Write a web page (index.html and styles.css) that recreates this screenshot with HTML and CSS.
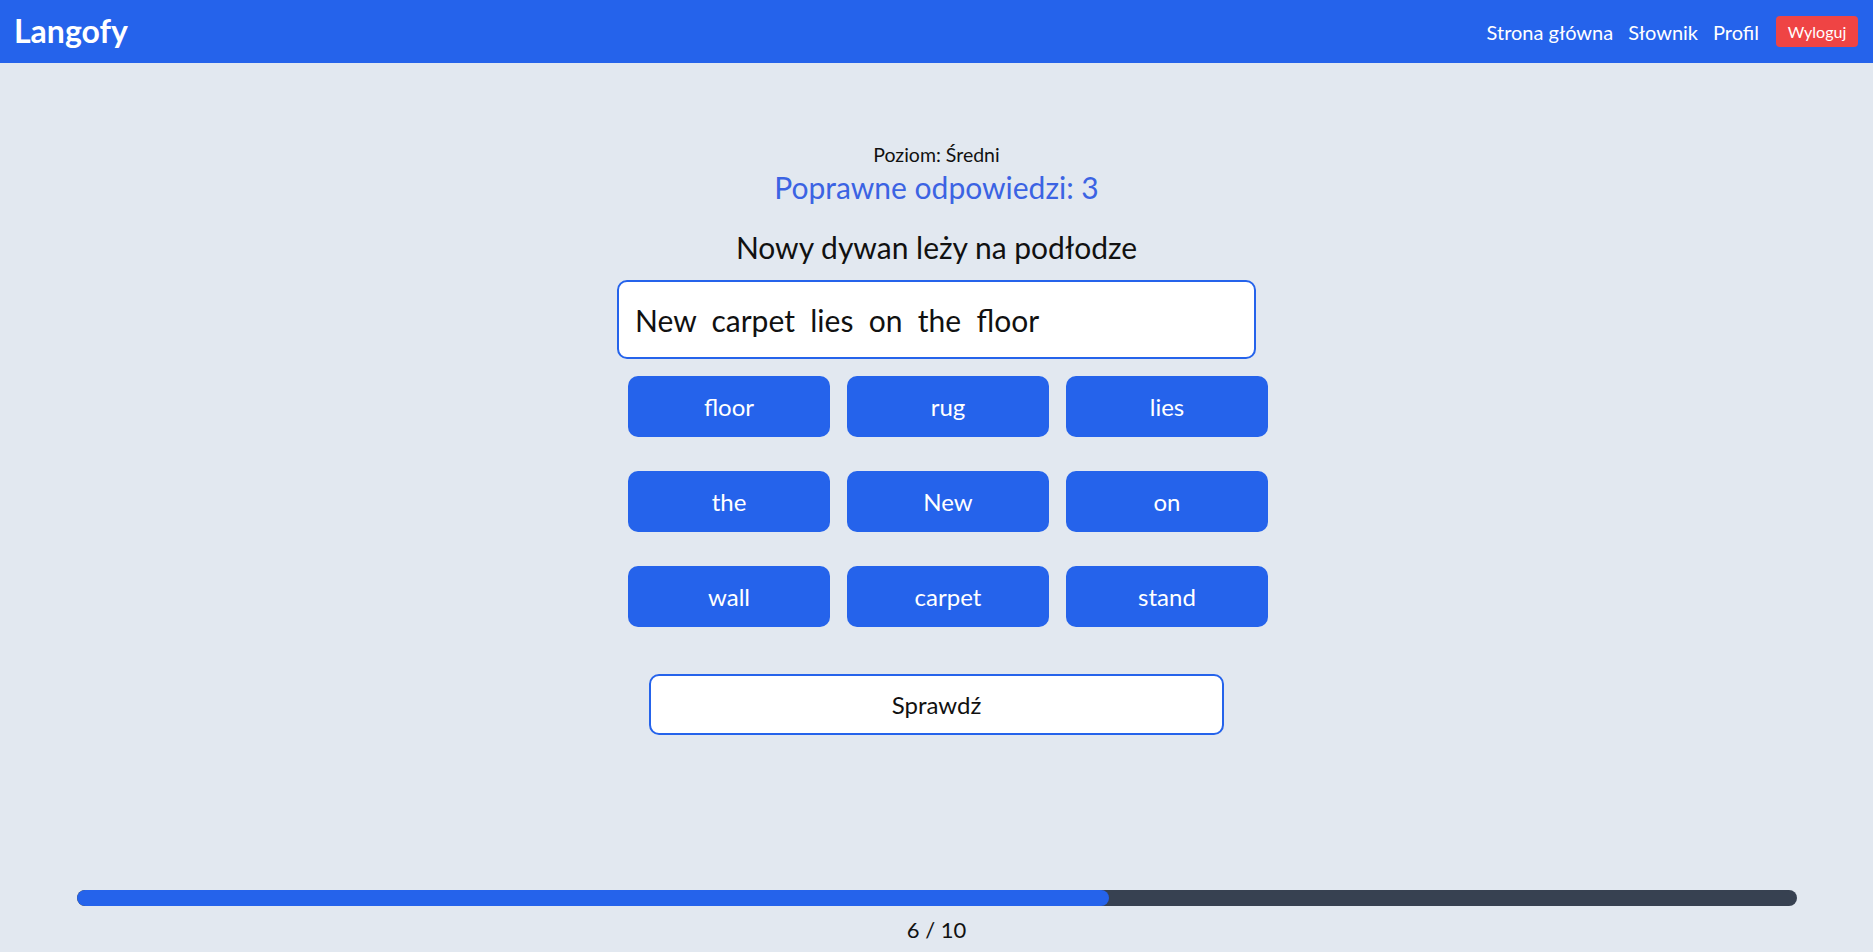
FILE: index.html
```html
<!DOCTYPE html>
<html lang="pl">
<head>
<meta charset="utf-8">
<title>Langofy</title>
<link rel="stylesheet" href="styles.css">
</head>
<body>
<nav class="nav">
  <div class="logo">Langofy</div>
  <div class="links">
    <a class="link" href="#">Strona główna</a>
    <a class="link" href="#">Słownik</a>
    <a class="link" href="#">Profil</a>
    <button class="logout">Wyloguj</button>
  </div>
</nav>
<main class="main">
  <div class="level">Poziom: Średni</div>
  <div class="score">Poprawne odpowiedzi: 3</div>
  <div class="sentence">Nowy dywan leży na podłodze</div>
  <div class="answer">New  carpet  lies  on  the  floor</div>
  <div class="words">
    <button class="word">floor</button>
    <button class="word">rug</button>
    <button class="word">lies</button>
    <button class="word">the</button>
    <button class="word">New</button>
    <button class="word">on</button>
    <button class="word">wall</button>
    <button class="word">carpet</button>
    <button class="word">stand</button>
  </div>
  <button class="check">Sprawdź</button>
</main>
<footer class="footer">
  <div class="bar"><div class="bar-fill" style="width: 60%"></div></div>
  <div class="count">6 / 10</div>
</footer>
</body>
</html>
```
FILE: styles.css
```css
* { box-sizing: border-box; }
html, body { margin: 0; padding: 0; }
body {
  font-family: "Segoe UI", "Lato", "Open Sans", sans-serif;
  background: #e2e8f0;
  color: #111;
  height: 952px;
  display: flex;
  flex-direction: column;
  overflow: hidden;
}
.nav {
  height: 63px;
  flex: none;
  background: #2563eb;
  display: flex;
  align-items: center;
  justify-content: space-between;
  padding: 0 15px 0 14px;
}
.logo {
  color: #fff;
  font-weight: 700;
  font-size: 32px;
  line-height: 38px;
  margin-top: -2px;
}
.links {
  display: flex;
  align-items: center;
  gap: 15px;
}
.link {
  color: #fff;
  text-decoration: none;
  font-size: 20px;
  line-height: 28px;
}
.logout {
  background: #ef4444;
  color: #fff;
  border: none;
  border-radius: 4px;
  font-family: inherit;
  font-size: 16px;
  height: 31px;
  width: 82px;
  padding: 0;
  margin-left: 2px;
}
.main {
  display: flex;
  flex-direction: column;
  align-items: center;
  padding-top: 79px;
}
.level {
  font-size: 19.5px;
  line-height: 26px;
}
.score {
  font-size: 30px;
  line-height: 36px;
  color: #3b63e3;
  margin-top: 1px;
}
.sentence {
  font-size: 30px;
  line-height: 36px;
  margin-top: 24px;
}
.answer {
  margin-top: 15px;
  width: 639px;
  height: 79px;
  background: #fff;
  border: 2px solid #2563eb;
  border-radius: 10px;
  padding: 0 16px;
  display: flex;
  align-items: center;
  white-space: pre;
  font-size: 30px;
}
.words {
  margin-top: 17px;
  margin-left: 23px;
  display: grid;
  grid-template-columns: repeat(3, 202px);
  column-gap: 17px;
  row-gap: 34px;
}
.word {
  height: 61px;
  background: #2563eb;
  color: #fff;
  border: none;
  border-radius: 10px;
  font-family: inherit;
  font-size: 24px;
}
.check {
  margin-top: 47px;
  width: 575px;
  height: 61px;
  background: #fff;
  border: 2px solid #2563eb;
  border-radius: 10px;
  font-family: inherit;
  font-size: 24px;
  color: #111;
}
.footer {
  margin-top: auto;
  display: flex;
  flex-direction: column;
  align-items: center;
  padding-bottom: 8px;
}
.bar {
  width: 1720px;
  height: 16px;
  border-radius: 8px;
  background: #374151;
  overflow: hidden;
}
.bar-fill {
  height: 100%;
  background: #2563eb;
  border-radius: 8px;
}
.count {
  margin-top: 10px;
  font-size: 22px;
  line-height: 28px;
}
```
